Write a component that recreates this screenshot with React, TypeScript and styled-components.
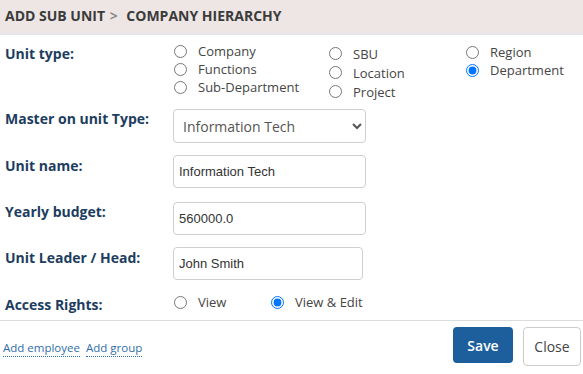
import React, { useState } from 'react';
import styled, { createGlobalStyle } from 'styled-components';

const GlobalStyle = createGlobalStyle`
  body {
    margin: 0;
    background: #fff;
    font-family: "Open Sans", "Noto Sans", sans-serif;
  }
`;

const unitColumns = [
  { width: 155, top: 0, step: 18, items: ['Company', 'Functions', 'Sub-Department'] },
  { width: 137, top: 2, step: 19, items: ['SBU', 'Location', 'Project'] },
  { width: 110, top: 1, step: 18, items: ['Region', 'Department'] },
];

const App: React.FC = () => {
  const [unitType, setUnitType] = useState('Department');
  const [access, setAccess] = useState('edit');

  return (
    <Container>
      <GlobalStyle />
      <Header>
        ADD SUB UNIT <Crumb>&gt;</Crumb> COMPANY HIERARCHY
      </Header>
      <Form>
        <Row $top={7}>
          <Label $offset={2}>Unit type:</Label>
          <RadioColumns>
            {unitColumns.map((col, i) => (
              <RadioColumn key={i} $width={col.width} $top={col.top}>
                {col.items.map((item) => (
                  <RadioItem key={item} $height={col.step}>
                    <input
                      type="radio"
                      name="unitType"
                      checked={unitType === item}
                      onChange={() => setUnitType(item)}
                    />
                    <span>{item}</span>
                  </RadioItem>
                ))}
              </RadioColumn>
            ))}
          </RadioColumns>
        </Row>
        <Row $top={8}>
          <Label>Master on unit Type:</Label>
          <Select defaultValue="it">
            <option value="it">Information Tech</option>
          </Select>
        </Row>
        <Row $top={12}>
          <Label $offset={1}>Unit name:</Label>
          <Input defaultValue="Information Tech" />
        </Row>
        <Row $top={14}>
          <Label $offset={0}>Yearly budget:</Label>
          <Input defaultValue="560000.0" />
        </Row>
        <Row $top={12}>
          <Label $offset={1}>Unit Leader / Head:</Label>
          <Input defaultValue="John Smith" $width={190} />
        </Row>
        <Row $top={13}>
          <Label $offset={2}>Access Rights:</Label>
          <RadioColumns>
            <RadioColumn $width={97} $top={0}>
              <RadioItem $height={18}>
                <input type="radio" name="access" checked={access === 'view'} onChange={() => setAccess('view')} />
                <span>View</span>
              </RadioItem>
            </RadioColumn>
            <RadioColumn $width={120} $top={0}>
              <RadioItem $height={18}>
                <input type="radio" name="access" checked={access === 'edit'} onChange={() => setAccess('edit')} />
                <span>View &amp; Edit</span>
              </RadioItem>
            </RadioColumn>
          </RadioColumns>
        </Row>
      </Form>
      <Footer>
        <Links>
          <LinkText href="#">Add employee</LinkText>
          <LinkText href="#">Add group</LinkText>
        </Links>
        <Buttons>
          <SaveButton>Save</SaveButton>
          <CloseButton>Close</CloseButton>
        </Buttons>
      </Footer>
    </Container>
  );
};

const Container = styled.div`
  position: relative;
  width: 583px;
  height: 374px;
  overflow: hidden;
`;
const Header = styled.div`
  height: 35px;
  box-sizing: border-box;
  padding: 6px 0 0 5px;
  background: #ede6e5;
  border-bottom: 2px solid #e4e6ec;
  font-size: 14px;
  font-weight: 700;
  color: #3b3b3b;
  line-height: 19px;
`;
const Crumb = styled.span`
  color: #8a8a8a;
  margin-left: 1px;
  margin-right: 5px;
`;
const Form = styled.div`
  display: flex;
  flex-direction: column;
`;
const Row = styled.div<{ $top: number }>`
  display: flex;
  align-items: flex-start;
  margin-top: ${(p) => p.$top}px;
`;
const Label = styled.div<{ $offset?: number }>`
  width: 168px;
  padding-left: 5px;
  padding-top: ${(p) => p.$offset || 0}px;
  font-size: 14px;
  font-weight: 700;
  line-height: 19px;
  color: #1d3d60;
  flex-shrink: 0;
`;
const RadioColumns = styled.div`
  display: flex;
`;
const RadioColumn = styled.div<{ $width: number; $top: number }>`
  display: flex;
  flex-direction: column;
  width: ${(p) => p.$width}px;
  padding-top: ${(p) => p.$top}px;
`;
const RadioItem = styled.label<{ $height: number }>`
  display: flex;
  align-items: center;
  height: ${(p) => p.$height}px;
  font-size: 13px;
  color: #454545;
  white-space: nowrap;
  input {
    margin: 0 11px 0 1px;
    width: 13px;
    height: 13px;
  }
`;
const Select = styled.select`
  width: 193px;
  height: 34px;
  box-sizing: border-box;
  border: 1px solid #cfcfcf;
  border-radius: 4px;
  background: #fff;
  padding: 0 4px 0 5px;
  font-family: "Open Sans", sans-serif;
  font-size: 14px;
  color: #555;
`;
const Input = styled.input<{ $width?: number }>`
  width: ${(p) => p.$width || 193}px;
  height: 33px;
  box-sizing: border-box;
  border: 1px solid #cfcfcf;
  border-radius: 4px;
  padding: 0 5px;
  font-family: "Liberation Sans", Arial, sans-serif;
  font-size: 13px;
  color: #333;
  outline: none;
`;
const Footer = styled.div`
  position: absolute;
  top: 320px;
  left: 0;
  width: 583px;
  box-sizing: border-box;
  border-top: 1px solid #dcdcdc;
  padding: 6px 2px 0 3px;
  display: flex;
  justify-content: space-between;
  align-items: center;
`;
const Links = styled.div`
  display: flex;
  gap: 6px;
  padding-top: 3px;
`;
const LinkText = styled.a`
  font-size: 11.5px;
  color: #2f6ea8;
  text-decoration: none;
  line-height: 16px;
  border-bottom: 1px dotted #2f6ea8;
`;
const Buttons = styled.div`
  display: flex;
  align-items: flex-start;
  gap: 10px;
`;
const SaveButton = styled.button`
  width: 60px;
  height: 36px;
  border: none;
  border-radius: 4px;
  background: #1d5f9c;
  color: #fff;
  font-family: "Open Sans", sans-serif;
  font-size: 14px;
  font-weight: 600;
  cursor: pointer;
`;
const CloseButton = styled.button`
  width: 58px;
  height: 39px;
  border: 1px solid #cccccc;
  border-radius: 4px;
  background: #fff;
  color: #444;
  font-family: "Open Sans", sans-serif;
  font-size: 14px;
  cursor: pointer;
`;

export default App;
